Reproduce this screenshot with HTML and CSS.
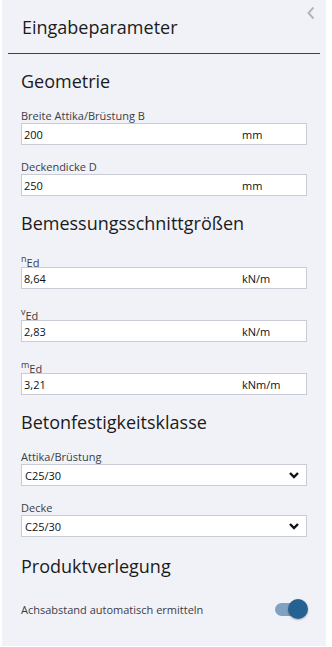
FILE: index.html
```html
<!DOCTYPE html>
<html lang="de">
<head>
  <meta charset="UTF-8">
  <meta name="viewport" content="width=device-width, initial-scale=1.0">
  <title>Eingabeparameter</title>
  <link rel="stylesheet" href="styles.css">
</head>
<body>
  <div class="panel">
    <div class="panel-header">
      <h1>Eingabeparameter</h1>
      <button class="btn-collapse" type="button" aria-label="Einklappen">
        <svg width="10" height="14" viewBox="0 0 10 14"><path d="M7.5 1.5 L2.5 7 L7.5 12.5" fill="none" stroke="#b4b6bc" stroke-width="2"/></svg>
      </button>
    </div>

    <div class="panel-body">
      <h2>Geometrie</h2>
      <div class="field">
        <label>Breite Attika/Brüstung B</label>
        <div class="input"><span class="value">200</span><span class="unit">mm</span></div>
      </div>
      <div class="field">
        <label>Deckendicke D</label>
        <div class="input"><span class="value">250</span><span class="unit">mm</span></div>
      </div>

      <h2>Bemessungsschnittgrößen</h2>
      <div class="field">
        <label class="sym"><span class="sym-main">n</span><sub>Ed</sub></label>
        <div class="input"><span class="value">8,64</span><span class="unit">kN/m</span></div>
      </div>
      <div class="field">
        <label class="sym"><span class="sym-main">v</span><sub>Ed</sub></label>
        <div class="input"><span class="value">2,83</span><span class="unit">kN/m</span></div>
      </div>
      <div class="field">
        <label class="sym"><span class="sym-main">m</span><sub>Ed</sub></label>
        <div class="input"><span class="value">3,21</span><span class="unit">kNm/m</span></div>
      </div>

      <h2>Betonfestigkeitsklasse</h2>
      <div class="field">
        <label>Attika/Brüstung</label>
        <div class="input select"><span class="value">C25/30</span>
          <svg width="12" height="8" viewBox="0 0 12 8"><path d="M2 2 L6 6 L10 2" fill="none" stroke="#111" stroke-width="2.4"/></svg>
        </div>
      </div>
      <div class="field">
        <label>Decke</label>
        <div class="input select"><span class="value">C25/30</span>
          <svg width="12" height="8" viewBox="0 0 12 8"><path d="M2 2 L6 6 L10 2" fill="none" stroke="#111" stroke-width="2.4"/></svg>
        </div>
      </div>

      <h2 class="last">Produktverlegung</h2>
      <div class="toggle-row">
        <span>Achsabstand automatisch ermitteln</span>
        <span class="toggle"><span class="knob"></span></span>
      </div>
    </div>
  </div>
</body>
</html>
```

FILE: styles.css
```css
body {
  font-family: 'Open Sans', 'Noto Sans', sans-serif;
  margin: 0;
  background-color: #ffffff;
}
.panel {
  width: 324px;
  height: 646px;
  margin-left: 2px;
  background-color: #f1f2f8;
  box-sizing: border-box;
}
.panel-header {
  position: relative;
  margin: 0 6px;
  height: 53px;
  border-bottom: 1px solid #1c4a78;
  display: flex;
  align-items: center;
}
h1 {
  margin: 0 0 0 14px;
  font-size: 18px;
  font-weight: normal;
  color: #1b1b1b;
}
.btn-collapse {
  position: absolute;
  top: 6px;
  right: 4px;
  border: none;
  background: none;
  padding: 0;
  cursor: pointer;
}
.panel-body {
  padding: 0 19px 0 19px;
}
h2 {
  margin: 14px 0 14px;
  font-size: 18px;
  line-height: 26px;
  font-weight: normal;
  color: #1b1b1b;
}
h2.last {
  margin-top: 16px;
}
.field {
  margin-bottom: 14px;
}
label {
  display: block;
  font-size: 11px;
  line-height: 15px;
  color: #3c3c44;
}
.sym {
  line-height: 17px;
  height: 17px;
}
.sym-main {
  font-size: 9px;
  vertical-align: 3px;
}
.sym sub {
  font-size: 11px;
  vertical-align: -2px;
}
.input {
  display: flex;
  align-items: center;
  height: 22px;
  box-sizing: border-box;
  border: 1px solid #c9ccd6;
  background-color: #ffffff;
  font-size: 11px;
  color: #111111;
  padding-left: 2px;
}
.input .value {
  flex: 1;
}
.input .unit {
  width: 64px;
}
.select {
  padding-left: 3px;
  padding-right: 6px;
}
.toggle-row {
  display: flex;
  align-items: center;
  justify-content: space-between;
  font-size: 11px;
  color: #3c3c44;
  padding: 9px 2px 0 0;
}
.toggle {
  position: relative;
  width: 30px;
  height: 13px;
  border-radius: 7px;
  background-color: #7fa2c2;
}
.knob {
  position: absolute;
  right: -3px;
  top: -4px;
  width: 20px;
  height: 20px;
  border-radius: 50%;
  background-color: #256291;
  box-shadow: 0 1px 2px rgba(0, 0, 0, 0.3);
}
```
